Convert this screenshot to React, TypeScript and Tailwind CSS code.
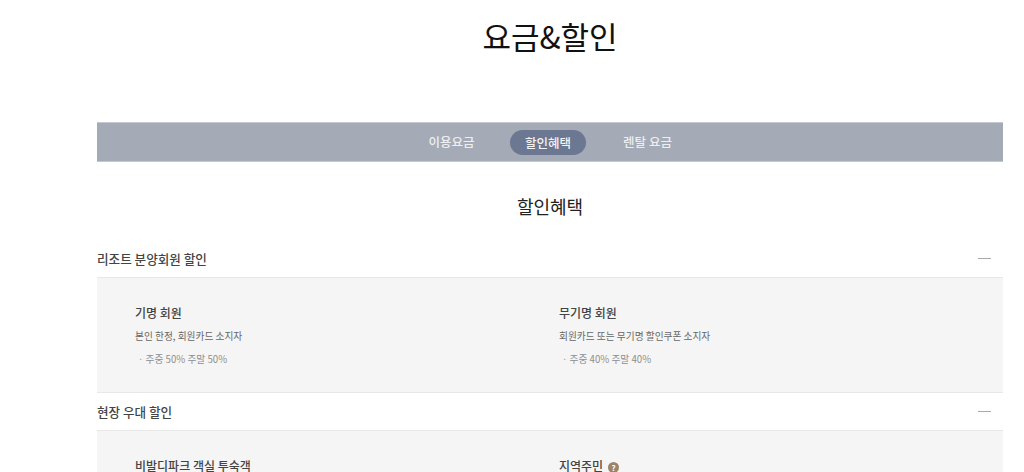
const font = { fontFamily: '"Noto Sans CJK KR", "Noto Sans", sans-serif' };

interface Benefit {
  title: string;
  hasHelp?: boolean;
  desc?: string;
  rate?: string;
}

interface Section {
  name: string;
  items: Benefit[];
}

const sections: Section[] = [
  {
    name: '리조트 분양회원 할인',
    items: [
      { title: '기명 회원', desc: '본인 한정, 회원카드 소지자', rate: '주중 50% 주말 50%' },
      { title: '무기명 회원', desc: '회원카드 또는 무기명 할인쿠폰 소지자', rate: '주중 40% 주말 40%' },
    ],
  },
  {
    name: '현장 우대 할인',
    items: [{ title: '비발디파크 객실 투숙객' }, { title: '지역주민', hasHelp: true }],
  },
];

function BenefitBlock({ item }: { item: Benefit }) {
  return (
    <div>
      <div className="flex items-center h-[18px] mt-px">
        <p className="text-[12px] leading-[18px] font-medium text-[#444]">{item.title}</p>
        {item.hasHelp && (
          <span className="ml-[5px] mt-[3px] w-[11px] h-[11px] rounded-full bg-[#9c8468] text-white text-[8px] leading-[11px] font-bold text-center">
            ?
          </span>
        )}
      </div>
      {item.desc && <p className="mt-[7px] text-[9.7px] leading-[14px] text-[#666]">{item.desc}</p>}
      {item.rate && <p className="mt-[9px] pl-[3px] text-[9.7px] leading-[14px] text-[#8f8f8f]">· {item.rate}</p>}
    </div>
  );
}

export default function App() {
  return (
    <div className="h-[472px] overflow-hidden bg-white" style={font}>
      <div className="ml-[97px] w-[906px]">
        <h1 className="pt-[13px] h-[122px] text-center text-[31px] leading-[46px] text-[#111]">요금&할인</h1>

        <nav className="h-[40px] bg-[#a5aab7] border-y border-[#c4c7d0] flex items-center justify-center text-[12.5px] font-medium text-[#eceef1]">
          <a className="w-[77px] text-center mr-[20px]">이용요금</a>
          <a className="w-[76px] h-[25px] leading-[25px] text-center rounded-full bg-[#6c7792] text-[#f2f3f5]">할인혜택</a>
          <a className="w-[79px] text-center ml-[22px]">렌탈 요금</a>
        </nav>

        <h2 className="mt-[29px] h-[30px] text-center text-[18px] leading-[30px] text-[#222]">할인혜택</h2>

        <div className="mt-[19px]">
          {sections.map((section) => (
            <section key={section.name}>
              <div className="h-[38px] flex items-center justify-between border-b border-[#e8e8e8]">
                <h3 className="pt-px text-[12.6px] font-medium text-[#444]">{section.name}</h3>
                <span className="w-[13px] h-px bg-[#aaa] mr-[12px]" />
              </div>
              <div className="h-[115px] pt-[25px] pl-[38px] grid grid-cols-[424px_1fr] bg-[#f5f5f5] border-b border-[#e8e8e8]">
                {section.items.map((item) => (
                  <BenefitBlock key={item.title} item={item} />
                ))}
              </div>
            </section>
          ))}
        </div>
      </div>
    </div>
  );
}
